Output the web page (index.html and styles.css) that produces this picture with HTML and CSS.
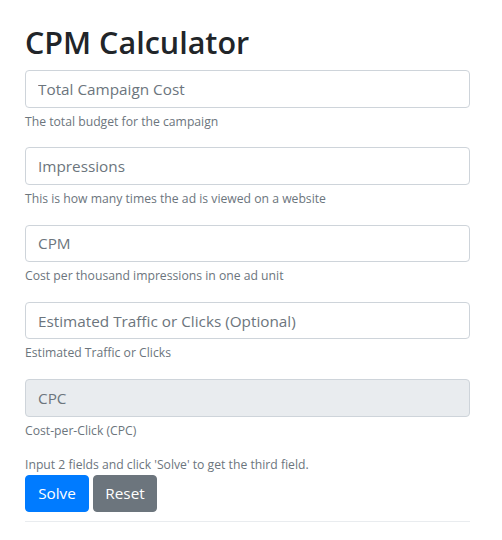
FILE: index.html
```html
<!DOCTYPE html>
<html>
<head>
<meta charset="utf-8">
<link rel="stylesheet" href="styles.css">
</head>
<body>
<div class="container">
  <h1 class="title">CPM Calculator</h1>
  <div class="group">
    <input class="field" type="text" placeholder="Total Campaign Cost">
    <small class="help">The total budget for the campaign</small>
  </div>
  <div class="group">
    <input class="field" type="text" placeholder="Impressions">
    <small class="help">This is how many times the ad is viewed on a website</small>
  </div>
  <div class="group">
    <input class="field" type="text" placeholder="CPM">
    <small class="help">Cost per thousand impressions in one ad unit</small>
  </div>
  <div class="group">
    <input class="field" type="text" placeholder="Estimated Traffic or Clicks (Optional)">
    <small class="help">Estimated Traffic or Clicks</small>
  </div>
  <div class="group group-last">
    <input class="field" type="text" placeholder="CPC" disabled>
    <small class="help">Cost-per-Click (CPC)</small>
  </div>
  <p class="hint">Input 2 fields and click 'Solve' to get the third field.</p>
  <div class="actions">
    <button class="btn btn-primary" type="button">Solve</button>
    <button class="btn btn-secondary" type="button">Reset</button>
  </div>
  <hr class="rule">
</div>
</body>
</html>
```
FILE: styles.css
```css
* { box-sizing: border-box; }
html, body { margin: 0; padding: 0; background: #fff; }
body {
  font-family: "Open Sans", "Noto Sans", sans-serif;
  font-size: 16px;
  line-height: 1.5;
  color: #212529;
}
.container {
  width: 445px;
  margin-left: 25px;
  padding-top: 22px;
}
.title {
  margin: 0 0 8px 0;
  font-size: 30.5px;
  font-weight: 600;
  line-height: 40px;
  color: #212529;
}
.group { margin-bottom: 16px; }
.group-last { margin-bottom: 15px; }
.field {
  display: block;
  width: 100%;
  height: 37.5px;
  padding: 6px 12px;
  font-family: inherit;
  font-size: 15.3px;
  line-height: 1.5;
  color: #495057;
  background: #fff;
  border: 1px solid #ced4da;
  border-radius: 4px;
  outline: none;
}
.field::placeholder { color: #6c757d; opacity: 1; }
.field:disabled { background: #e9ecef; }
.help {
  display: block;
  margin-top: 4px;
  font-size: 12.2px;
  line-height: 19.75px;
  color: #6c757d;
}
.hint {
  margin: 0;
  font-size: 12.2px;
  line-height: 20px;
  color: #6c757d;
}
.actions { display: flex; gap: 4px; }
.btn {
  width: 64px;
  height: 37px;
  padding: 6px 0;
  font-family: inherit;
  font-size: 15.3px;
  line-height: 1.5;
  color: #fff;
  text-align: center;
  border: 1px solid transparent;
  border-radius: 4px;
}
.btn-primary { background: #007bff; border-color: #007bff; }
.btn-secondary { background: #6c757d; border-color: #6c757d; }
.rule {
  margin: 9px 0 0 0;
  border: 0;
  border-top: 1px solid #e9ecef;
}
```
